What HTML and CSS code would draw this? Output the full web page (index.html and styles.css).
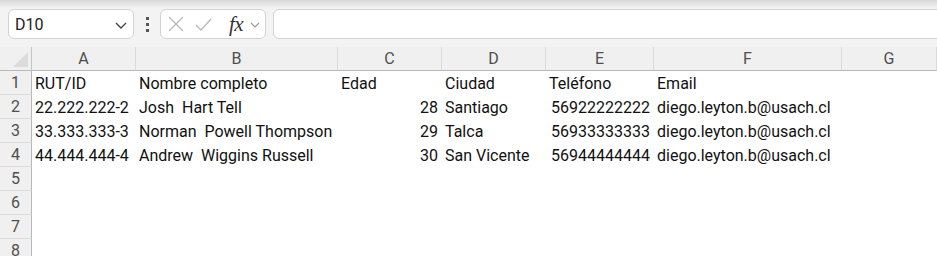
FILE: index.html
```html
<!DOCTYPE html>
<html lang="es">
<head>
    <meta charset="UTF-8">
    <title>Libro1 - Hoja1</title>
    <link rel="stylesheet" href="styles.css">
</head>
<body>
    <div class="ribbon-shadow"></div>

    <div class="formula-bar">
        <div class="name-box">
            <span>D10</span>
            <svg class="chev" width="12" height="7" viewBox="0 0 12 7"><path d="M1 1 L6 6 L11 1" fill="none" stroke="#444" stroke-width="1.4"/></svg>
        </div>
        <div class="dots"><i></i><i></i><i></i></div>
        <div class="fx-box">
            <svg width="16" height="16" viewBox="0 0 16 16"><path d="M1 1 L15 15 M15 1 L1 15" stroke="#b8b8b8" stroke-width="1.3" fill="none"/></svg>
            <svg class="check" width="17" height="13" viewBox="0 0 17 13"><path d="M1 7 L6 12 L16 1" stroke="#b8b8b8" stroke-width="1.3" fill="none"/></svg>
            <span class="fx">fx</span>
            <svg width="10" height="6" viewBox="0 0 10 6"><path d="M1 1 L5 5 L9 1" stroke="#9a9a9a" stroke-width="1.2" fill="none"/></svg>
        </div>
        <div class="formula-input"></div>
    </div>

    <div class="sheet">
        <!-- column headers -->
        <div class="corner"><svg width="15" height="15" viewBox="0 0 15 15"><path d="M15 0 L15 15 L0 15 Z" fill="#dcdcdc"/></svg></div>
        <div class="col-head">A</div>
        <div class="col-head">B</div>
        <div class="col-head">C</div>
        <div class="col-head">D</div>
        <div class="col-head">E</div>
        <div class="col-head">F</div>
        <div class="col-head">G</div>

        <div class="row-head">1</div>
        <div class="cell">RUT/ID</div>
        <div class="cell">Nombre completo</div>
        <div class="cell">Edad</div>
        <div class="cell">Ciudad</div>
        <div class="cell">Teléfono</div>
        <div class="cell">Email</div>
        <div class="cell"></div>

        <div class="row-head">2</div>
        <div class="cell">22.222.222-2</div>
        <div class="cell">Josh&nbsp; Hart Tell</div>
        <div class="cell num">28</div>
        <div class="cell">Santiago</div>
        <div class="cell num">56922222222</div>
        <div class="cell">diego.leyton.b@usach.cl</div>
        <div class="cell"></div>

        <div class="row-head">3</div>
        <div class="cell">33.333.333-3</div>
        <div class="cell">Norman&nbsp; Powell Thompson</div>
        <div class="cell num">29</div>
        <div class="cell">Talca</div>
        <div class="cell num">56933333333</div>
        <div class="cell">diego.leyton.b@usach.cl</div>
        <div class="cell"></div>

        <div class="row-head">4</div>
        <div class="cell">44.444.444-4</div>
        <div class="cell">Andrew&nbsp; Wiggins Russell</div>
        <div class="cell num">30</div>
        <div class="cell">San Vicente</div>
        <div class="cell num">56944444444</div>
        <div class="cell">diego.leyton.b@usach.cl</div>
        <div class="cell"></div>

        <div class="row-head">5</div>
        <div class="cell"></div><div class="cell"></div><div class="cell"></div><div class="cell"></div><div class="cell"></div><div class="cell"></div><div class="cell"></div>
        <div class="row-head">6</div>
        <div class="cell"></div><div class="cell"></div><div class="cell"></div><div class="cell"></div><div class="cell"></div><div class="cell"></div><div class="cell"></div>
        <div class="row-head">7</div>
        <div class="cell"></div><div class="cell"></div><div class="cell"></div><div class="cell"></div><div class="cell"></div><div class="cell"></div><div class="cell"></div>
        <div class="row-head">8</div>
        <div class="cell"></div><div class="cell"></div><div class="cell"></div><div class="cell"></div><div class="cell"></div><div class="cell"></div><div class="cell"></div>
    </div>
</body>
</html>
```

FILE: styles.css
```css
* {
    box-sizing: border-box;
}
body {
    margin: 0;
    width: 937px;
    height: 256px;
    overflow: hidden;
    font-family: Roboto, "Liberation Sans", sans-serif;
    font-size: 16px;
    color: #111;
    background: #fff;
}
.ribbon-shadow {
    height: 8px;
    background: linear-gradient(#d9d9d9, #f3f3f3);
}
.formula-bar {
    display: flex;
    align-items: flex-start;
    height: 39px;
    padding: 1px 0 0 8px;
    background: #f3f3f3;
    overflow: hidden;
}
.name-box {
    display: flex;
    align-items: center;
    justify-content: space-between;
    width: 126px;
    height: 30px;
    padding: 0 6px 0 6px;
    background: #fff;
    border: 1px solid #d2d2d2;
    border-radius: 6px;
    color: #222;
}
.name-box .chev {
    margin-top: 2px;
}
.dots {
    display: flex;
    flex-direction: column;
    gap: 3px;
    margin: 8px 11px 0 12px;
}
.dots i {
    display: block;
    width: 3px;
    height: 3px;
    background: #555;
}
.fx-box {
    display: flex;
    align-items: center;
    width: 106px;
    height: 30px;
    padding-left: 7px;
    background: #fff;
    border: 1px solid #d2d2d2;
    border-radius: 6px;
}
.fx-box .check {
    margin-left: 11px;
}
.fx {
    margin-left: 17px;
    font-family: "Liberation Serif", serif;
    font-style: italic;
    font-size: 21px;
    color: #333;
    letter-spacing: -0.5px;
}
.fx-box svg:last-child {
    margin-left: 7px;
    margin-top: 2px;
}
.formula-input {
    flex: 1;
    height: 30px;
    margin-left: 7px;
    margin-right: -20px;
    background: #fff;
    border: 1px solid #d2d2d2;
    border-radius: 6px;
}
.sheet {
    display: grid;
    grid-template-columns: 32px 104px 202px 104px 104px 108px 188px 1fr;
    grid-auto-rows: 24px;
}
.corner {
    display: flex;
    align-items: flex-end;
    justify-content: flex-end;
    padding: 0 3px 3px 0;
    background: #f0f0f0;
    border-right: 1px solid #c4c4c4;
    border-bottom: 1px solid #b9b9b9;
}
.col-head {
    padding-top: 1px;
    line-height: 22px;
    text-align: center;
    color: #4f4f4f;
    background: #f0f0f0;
    border-right: 1px solid #dadada;
    border-bottom: 1px solid #b9b9b9;
}
.col-head:last-of-type {
    border-right: none;
}
.row-head {
    padding-top: 1px;
    line-height: 22px;
    text-align: center;
    color: #4f4f4f;
    background: #f0f0f0;
    border-right: 1px solid #b9b9b9;
    border-bottom: 1px solid #dadada;
}
.cell {
    padding: 1px 4px 0 3px;
    line-height: 23px;
    white-space: nowrap;
    overflow: visible;
}
.num {
    text-align: right;
}
```
